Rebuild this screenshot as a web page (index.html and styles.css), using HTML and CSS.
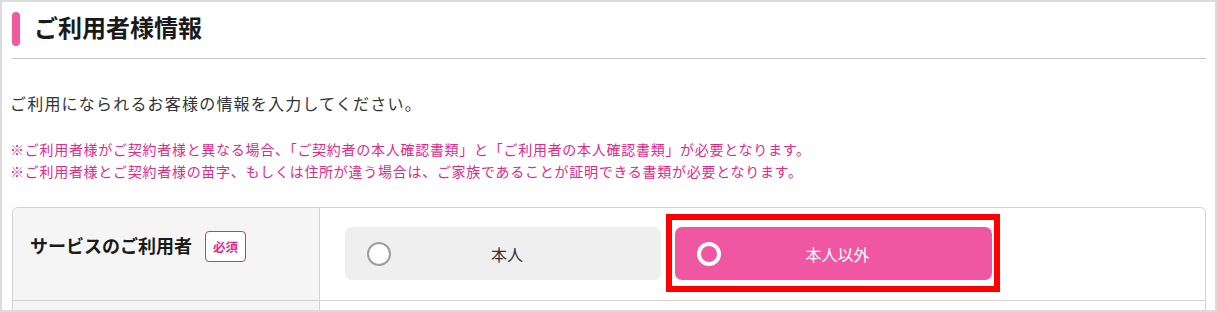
FILE: index.html
```html
<!DOCTYPE html>
<html lang="ja">
<head>
<meta charset="utf-8">
<title>ご利用者様情報</title>
<link rel="stylesheet" href="styles.css">
</head>
<body>
<div class="frame">
  <div class="section-head">
    <span class="head-bar"></span>
    <h2 class="head-title">ご利用者様情報</h2>
  </div>
  <p class="intro">ご利用になられるお客様の情報を入力してください。</p>
  <div class="notes">
    <p>※ご利用者様がご契約者様と異なる場合、「ご契約者の本人確認書類」と「ご利用者の本人確認書類」が必要となります。</p>
    <p>※ご利用者様とご契約者様の苗字、もしくは住所が違う場合は、ご家族であることが証明できる書類が必要となります。</p>
  </div>
  <div class="form-table">
    <div class="form-row">
      <div class="label-cell">
        <span class="label-text">サービスのご利用者</span>
        <span class="badge">必須</span>
      </div>
      <div class="field-cell">
        <div class="option">
          <span class="radio"></span>
          <span class="option-text">本人</span>
        </div>
        <div class="option option-selected">
          <span class="radio radio-on"></span>
          <span class="option-text">本人以外</span>
          <span class="highlight"></span>
        </div>
      </div>
    </div>
    <div class="form-row form-row-next">
      <div class="label-cell"></div>
      <div class="field-cell"></div>
    </div>
  </div>
</div>
</body>
</html>
```

FILE: styles.css
```css
* { box-sizing: border-box; }
html, body { margin: 0; padding: 0; background: #fff; }
body {
  font-family: "Noto Sans CJK JP", "Noto Sans", sans-serif;
  color: #333;
}
.frame {
  width: 1217px;
  height: 312px;
  border: 2px solid #dcdcdc;
  padding: 0 9px 0 10px;
  overflow: hidden;
}
.section-head {
  display: flex;
  align-items: center;
  gap: 14px;
  padding: 10px 0 12px 0;
  border-bottom: 1px solid #c8c8c8;
}
.head-bar {
  width: 8px;
  height: 34px;
  border-radius: 4px;
  background: #ef5aa1;
  flex: none;
}
.head-title {
  margin: -4px 0 0 0;
  font-size: 24px;
  line-height: 34px;
  font-weight: 700;
  color: #1a1a1a;
}
.intro {
  margin: 32px 0 0 -2px;
  font-size: 16px;
  line-height: 24px;
  letter-spacing: 1.2px;
  color: #333;
}
.notes {
  margin: 23px 0 0 -2px;
}
.notes p {
  margin: 0;
  font-size: 14px;
  line-height: 22px;
  letter-spacing: 0.72px;
  color: #e4278c;
}
.form-table {
  margin-top: 25px;
  border: 1px solid #d2d2d2;
  border-bottom: none;
  border-radius: 6px 6px 0 0;
  overflow: hidden;
}
.form-row {
  display: grid;
  grid-template-columns: 307px 1fr;
  height: 93px;
  border-bottom: 1px solid #d2d2d2;
}
.form-row-next { height: 20px; border-bottom: none; }
.label-cell {
  background: #f5f5f5;
  border-right: 1px solid #d2d2d2;
  display: flex;
  align-items: flex-start;
  gap: 13px;
  padding: 23px 0 0 17px;
}
.label-text {
  font-size: 18px;
  line-height: 29px;
  font-weight: 700;
  color: #1a1a1a;
}
.badge {
  width: 41px;
  height: 31px;
  border: 1.5px solid #e4278c;
  border-radius: 4px;
  color: #e4278c;
  font-size: 12.5px;
  font-weight: 700;
  display: flex;
  align-items: center;
  justify-content: center;
  background: #fff;
}
.field-cell {
  display: flex;
  gap: 14px;
  padding: 19px 0 0 25px;
  background: #fff;
}
.option {
  position: relative;
  width: 316px;
  height: 53px;
  border-radius: 7px;
  background: #efefef;
  display: grid;
  grid-template-columns: 24px 1fr;
  align-items: center;
  padding: 0 38px 0 22px;
}
.option-text {
  text-align: center;
  font-size: 16px;
  color: #333;
}
.radio {
  width: 24px;
  height: 24px;
  border-radius: 50%;
  border: 2px solid #9e9e9e;
  background: #fff;
}
.option-selected {
  background: #f057a3;
  width: 317px;
}
.option-selected .option-text { color: #fff; }
.radio-on {
  border: 4px solid #fff;
  background: transparent;
}
.highlight {
  position: absolute;
  left: -9px;
  top: -13px;
  right: -8px;
  bottom: -12px;
  border: 6px solid #ff0000;
  pointer-events: none;
}
```
